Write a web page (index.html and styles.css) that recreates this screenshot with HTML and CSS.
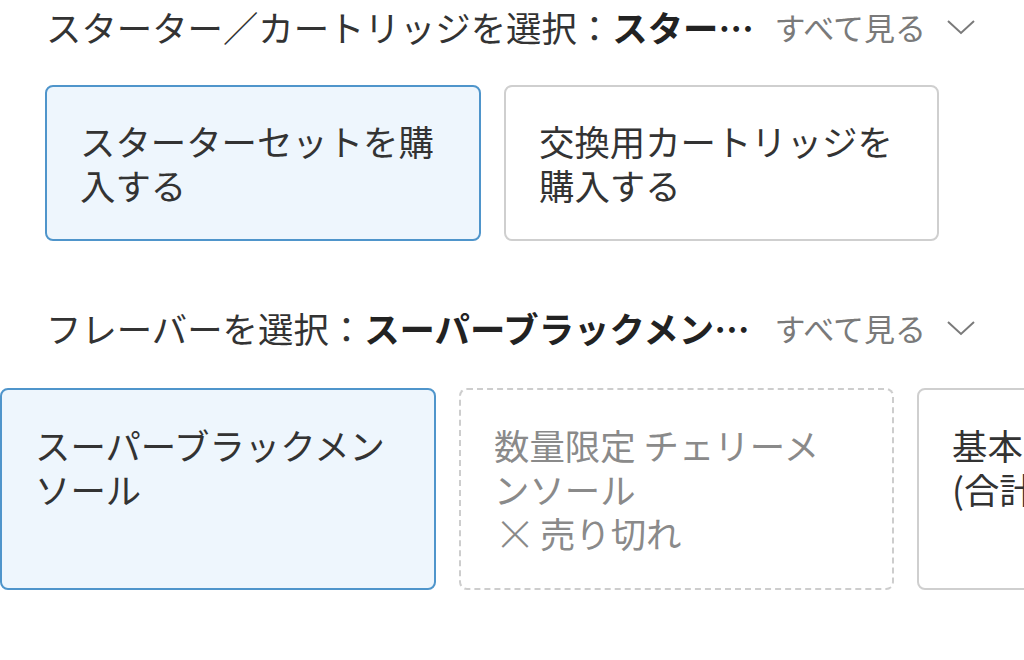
FILE: index.html
```html
<!DOCTYPE html>
<html lang="ja">
<head>
<meta charset="utf-8">
<title>選択</title>
<link rel="stylesheet" href="styles.css">
</head>
<body>
  <section class="group group-first">
    <div class="heading">
      <span class="label">スターター／カートリッジを選択：</span>
      <span class="value">スターターセット</span>
      <span class="see-all">すべて見る</span>
      <svg class="chevron" width="30" height="18" viewBox="0 0 30 18"><polyline points="2,3 15,15 28,3" fill="none" stroke="#7a7a7a" stroke-width="2"/></svg>
    </div>
    <div class="options options-start">
      <div class="card card-selected">スターターセットを購入する</div>
      <div class="card">交換用カートリッジを購入する</div>
    </div>
  </section>

  <section class="group">
    <div class="heading">
      <span class="label">フレーバーを選択：</span>
      <span class="value">スーパーブラックメンソール</span>
      <span class="see-all">すべて見る</span>
      <svg class="chevron" width="30" height="18" viewBox="0 0 30 18"><polyline points="2,3 15,15 28,3" fill="none" stroke="#7a7a7a" stroke-width="2"/></svg>
    </div>
    <div class="options options-scrolled">
      <div class="card card-selected">スーパーブラックメンソール</div>
      <div class="card card-soldout">数量限定 チェリーメンソール<br><span class="cross">×</span> 売り切れ</div>
      <div class="card">基本セット<br>(合計 3 本)</div>
    </div>
  </section>
</body>
</html>
```

FILE: styles.css
```css
html, body {
  margin: 0;
  padding: 0;
  background: #ffffff;
}

body {
  width: 1024px;
  height: 660px;
  overflow: hidden;
  font-family: "Noto Sans CJK JP", "Noto Sans", sans-serif;
  color: #333333;
}

.group {
  padding-top: 60px;
}

.group-first {
  padding-top: 0;
}

.heading {
  display: flex;
  align-items: center;
  height: 54px;
  padding: 0 48px 0 46px;
  font-size: 35.4px;
  line-height: 54px;
  white-space: nowrap;
}

.label {
  flex: 0 0 auto;
  color: #333333;
}

.value {
  flex: 0 1 auto;
  min-width: 0;
  overflow: hidden;
  text-overflow: ellipsis;
  font-weight: 700;
  color: #222222;
}

.see-all {
  flex: 0 0 auto;
  margin-left: 16px;
  font-size: 31px;
  color: #7a7a7a;
}

.chevron {
  flex: 0 0 auto;
  margin-left: 20px;
}

.options {
  display: flex;
  gap: 23px;
  margin-top: 31px;
  overflow: hidden;
}

.options-start {
  padding-left: 45px;
}

.options-scrolled {
  margin-top: 33px;
  padding-left: 0;
}

.card {
  flex: 0 0 435px;
  box-sizing: border-box;
  padding: 32px 40px 32px 33px;
  border: 2px solid #cfcfcf;
  border-radius: 8px;
  background: #ffffff;
  font-size: 35.4px;
  line-height: 44px;
  color: #333333;
}

.options-scrolled .card {
  padding-top: 33px;
  padding-bottom: 33px;
}

.card-selected {
  flex-basis: 436px;
  border-color: #4f95cb;
  background: #eef6fd;
}

.card-soldout {
  border: 2px dashed #cdcdcd;
  color: #8a8a8a;
}

.cross {
  font-size: 42px;
  font-weight: 300;
  line-height: 0;
  vertical-align: -2px;
  margin-right: -4px;
}
```
